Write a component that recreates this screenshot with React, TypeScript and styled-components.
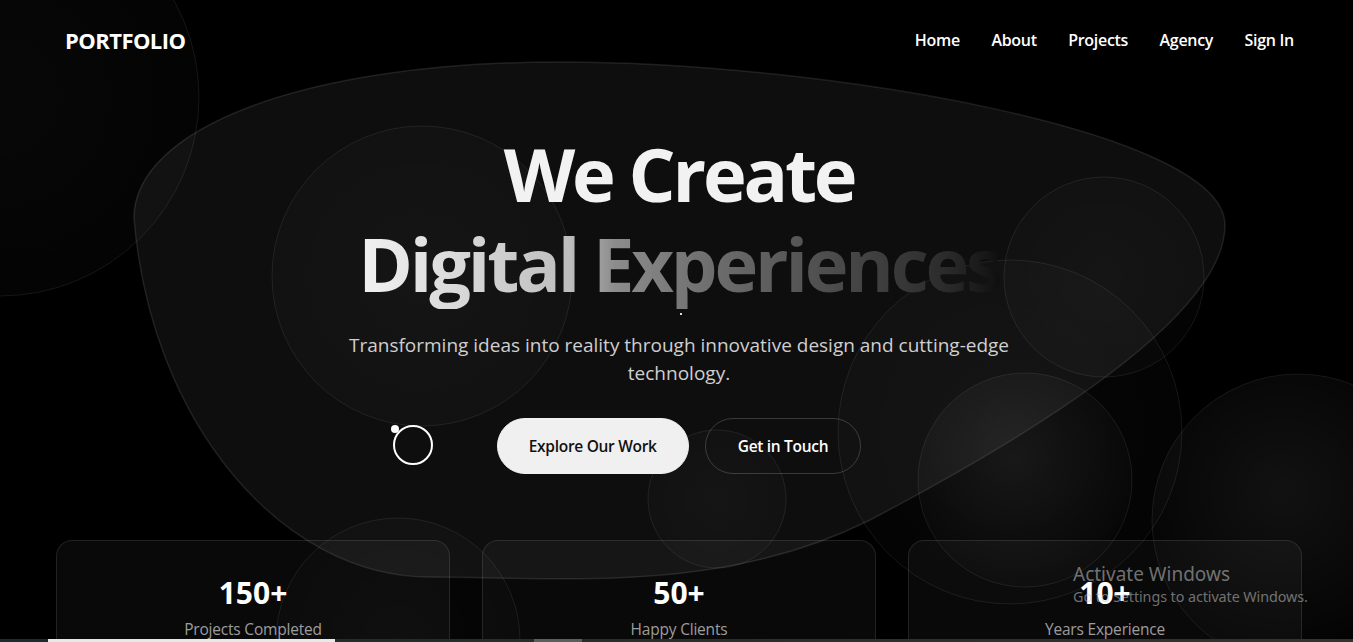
import React from "react";
import styled, { createGlobalStyle } from "styled-components";

const Global = createGlobalStyle`
  html, body { margin: 0; padding: 0; background: #000; overflow: hidden; }
  body { font-family: "Open Sans", "Noto Sans", sans-serif; color: #fff; }
  * { box-sizing: border-box; }
`;

const Page = styled.div`
  position: relative;
  width: 1358px;
  height: 642px;
  overflow: hidden;
  background: #000;
`;

const Backdrop = styled.svg`
  position: absolute;
  inset: 0;
  width: 1358px;
  height: 642px;
  pointer-events: none;
`;

const Content = styled.div`
  position: relative;
  display: flex;
  flex-direction: column;
`;

const Nav = styled.nav`
  height: 80px;
  padding: 0 64px 0 65px;
  display: flex;
  align-items: center;
  justify-content: space-between;
`;

const Logo = styled.div`
  font-size: 22px;
  font-weight: 700;
  letter-spacing: -0.55px;
  color: #fff;
`;

const Links = styled.ul`
  list-style: none;
  margin: 0;
  padding: 0;
  display: flex;
  gap: 31.5px;
`;

const LinkItem = styled.li`
  font-size: 16px;
  font-weight: 600;
  letter-spacing: -0.3px;
  color: #fff;
`;

const Hero = styled.section`
  display: flex;
  flex-direction: column;
  align-items: center;
  text-align: center;
  padding-top: 49px;
`;

const Title = styled.h1`
  margin: 0;
  font-size: 74px;
  line-height: 90px;
  font-weight: 700;
  letter-spacing: -3.2px;
  color: #f2f2f2;
`;

const Gradient = styled.span`
  display: inline-block;
  background: linear-gradient(90deg, #f2f2f2 0%, #bdbdbd 33%, #8c8c8c 40%, #6e6e6e 55%, #4a4a4a 75%, #2a2a2a 92%, #0f0f0f 100%);
  -webkit-background-clip: text;
  background-clip: text;
  color: transparent;
`;

const Caret = styled.div`
  width: 2px;
  height: 2px;
  background: #ddd;
  margin: 4px 0 0 3px;
`;

const Subtitle = styled.p`
  margin: 16px 0 0;
  max-width: 700px;
  font-size: 19px;
  line-height: 28px;
  font-weight: 400;
  letter-spacing: 0;
  color: #cfcfcf;
`;

const Actions = styled.div`
  display: flex;
  gap: 16px;
  margin-top: 31px;
`;

const Button = styled.button<{ $primary?: boolean }>`
  height: 56px;
  padding: 0 ${(p) => (p.$primary ? 31 : 32)}px;
  border-radius: 28px;
  font-family: inherit;
  font-size: 15.5px;
  font-weight: 600;
  letter-spacing: -0.3px;
  cursor: pointer;
  background: ${(p) => (p.$primary ? "#f0f0f0" : "transparent")};
  color: ${(p) => (p.$primary ? "#111" : "#fff")};
  border: 1px solid ${(p) => (p.$primary ? "#f0f0f0" : "rgba(255,255,255,0.18)")};
`;

const Stats = styled.div`
  display: grid;
  grid-template-columns: repeat(3, 1fr);
  gap: 32px;
  margin: 66px 56px 0;
`;

const Card = styled.div`
  height: 140px;
  padding: 33px 16px;
  border-radius: 16px;
  background: rgba(255, 255, 255, 0.035);
  border: 1px solid rgba(255, 255, 255, 0.1);
  display: flex;
  flex-direction: column;
  align-items: center;
`;

const Number = styled.div`
  font-size: 30px;
  line-height: 38px;
  font-weight: 700;
  color: #fff;
`;

const Label = styled.div`
  margin-top: 5px;
  font-size: 15.5px;
  line-height: 24px;
  letter-spacing: -0.2px;
  color: #9d9d9d;
`;

const Cursor = styled.div`
  position: absolute;
  left: 393px;
  top: 425px;
  width: 40px;
  height: 40px;
  border: 2px solid #fff;
  border-radius: 50%;
  pointer-events: none;
`;

const CursorDot = styled.div`
  position: absolute;
  left: 391px;
  top: 425px;
  width: 8px;
  height: 8px;
  background: #fff;
  border-radius: 50%;
  pointer-events: none;
`;

const Watermark = styled.div`
  position: absolute;
  left: 1073px;
  top: 561px;
  color: rgba(200, 200, 200, 0.55);
  font-family: "Noto Sans", "Open Sans", sans-serif;
  pointer-events: none;
`;

const WmTitle = styled.div`
  font-size: 19px;
  line-height: 26px;
`;

const WmText = styled.div`
  font-size: 14.4px;
  line-height: 20px;
  letter-spacing: -0.1px;
`;

const Strip = styled.div`
  position: absolute;
  left: 0;
  right: 0;
  bottom: 0;
  height: 3px;
  background: linear-gradient(90deg, #1c2b2b, #26302e 50%, #34332f);
`;

const StripThumb = styled.div<{ $left: number; $width: number; $color: string }>`
  position: absolute;
  bottom: 0;
  height: 3px;
  left: ${(p) => p.$left}px;
  width: ${(p) => p.$width}px;
  background: ${(p) => p.$color};
`;

const stats = [
  { n: "150+", l: "Projects Completed" },
  { n: "50+", l: "Happy Clients" },
  { n: "10+", l: "Years Experience" },
];

const circles = [
  { cx: 0, cy: 97, r: 199, g: "g1" },
  { cx: 422, cy: 276, r: 150, g: "g1" },
  { cx: 1104, cy: 277, r: 100, g: "g1" },
  { cx: 1010, cy: 432, r: 172, g: "g1" },
  { cx: 1025, cy: 480, r: 107, g: "g2" },
  { cx: 1298, cy: 520, r: 146, g: "g2" },
  { cx: 717, cy: 499, r: 69, g: "g1" },
  { cx: 398, cy: 640, r: 122, g: "g1" },
];

export default function App() {
  return (
    <Page>
      <Global />
      <Backdrop viewBox="0 0 1358 642">
        <defs>
          <radialGradient id="g1" cx="50%" cy="50%" r="50%">
            <stop offset="0%" stopColor="#fff" stopOpacity="0.03" />
            <stop offset="100%" stopColor="#fff" stopOpacity="0.015" />
          </radialGradient>
          <radialGradient id="g2" cx="45%" cy="40%" r="60%">
            <stop offset="0%" stopColor="#fff" stopOpacity="0.07" />
            <stop offset="100%" stopColor="#fff" stopOpacity="0.01" />
          </radialGradient>
        </defs>
        <path
          d="M 134 218 C 134 130, 300 62, 560 62 C 820 62, 1225 130, 1225 225 C 1225 310, 1060 420, 870 520 C 720 595, 560 577, 430 577 C 280 577, 150 420, 134 218 Z"
          fill="rgba(255,255,255,0.055)"
          stroke="rgba(255,255,255,0.1)"
          strokeWidth="1.5"
        />
        {circles.map((c, i) => (
          <circle
            key={i}
            cx={c.cx}
            cy={c.cy}
            r={c.r}
            fill={`url(#${c.g})`}
            stroke="rgba(255,255,255,0.08)"
            strokeWidth="1"
          />
        ))}
      </Backdrop>
      <Content>
        <Nav>
          <Logo>PORTFOLIO</Logo>
          <Links>
            {["Home", "About", "Projects", "Agency", "Sign In"].map((t) => (
              <LinkItem key={t}>{t}</LinkItem>
            ))}
          </Links>
        </Nav>
        <Hero>
          <Title>
            We Create
            <br />
            <Gradient>Digital Experiences</Gradient>
          </Title>
          <Caret />
          <Subtitle>
            Transforming ideas into reality through innovative design and cutting-edge technology.
          </Subtitle>
          <Actions>
            <Button $primary>Explore Our Work</Button>
            <Button>Get in Touch</Button>
          </Actions>
        </Hero>
        <Stats>
          {stats.map((s) => (
            <Card key={s.l}>
              <Number>{s.n}</Number>
              <Label>{s.l}</Label>
            </Card>
          ))}
        </Stats>
      </Content>
      <Cursor />
      <CursorDot />
      <Watermark>
        <WmTitle>Activate Windows</WmTitle>
        <WmText>Go to Settings to activate Windows.</WmText>
      </Watermark>
      <Strip>
        <StripThumb $left={48} $width={287} $color="#e8e8e8" />
        <StripThumb $left={534} $width={48} $color="#56615d" />
      </Strip>
    </Page>
  );
}
